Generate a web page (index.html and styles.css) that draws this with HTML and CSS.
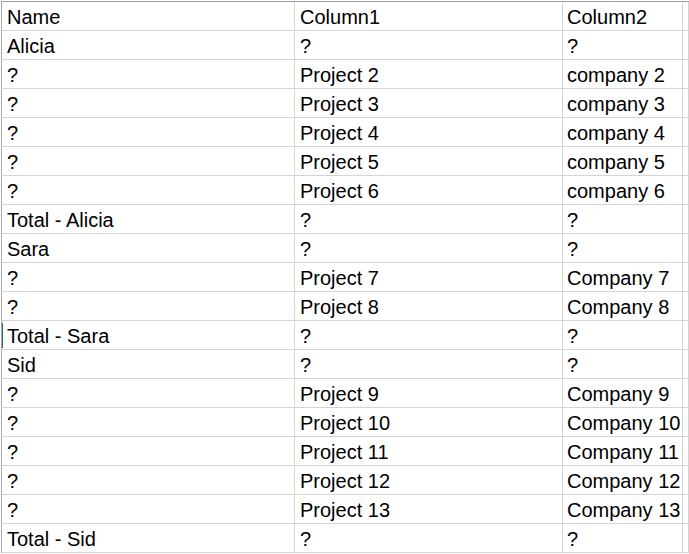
FILE: index.html
```html
<!DOCTYPE html>
<html>
<head>
<meta charset="utf-8">
<link rel="stylesheet" href="styles.css">
</head>
<body>
<div class="sheet">
  <div class="row"><div class="cell">Name</div><div class="cell">Column1</div><div class="cell">Column2</div><div class="cell"></div></div>
  <div class="row"><div class="cell">Alicia</div><div class="cell">?</div><div class="cell">?</div><div class="cell"></div></div>
  <div class="row"><div class="cell">?</div><div class="cell">Project 2</div><div class="cell">company 2</div><div class="cell"></div></div>
  <div class="row"><div class="cell">?</div><div class="cell">Project 3</div><div class="cell">company 3</div><div class="cell"></div></div>
  <div class="row"><div class="cell">?</div><div class="cell">Project 4</div><div class="cell">company 4</div><div class="cell"></div></div>
  <div class="row"><div class="cell">?</div><div class="cell">Project 5</div><div class="cell">company 5</div><div class="cell"></div></div>
  <div class="row"><div class="cell">?</div><div class="cell">Project 6</div><div class="cell">company 6</div><div class="cell"></div></div>
  <div class="row"><div class="cell">Total - Alicia</div><div class="cell">?</div><div class="cell">?</div><div class="cell"></div></div>
  <div class="row"><div class="cell">Sara</div><div class="cell">?</div><div class="cell">?</div><div class="cell"></div></div>
  <div class="row"><div class="cell">?</div><div class="cell">Project 7</div><div class="cell">Company 7</div><div class="cell"></div></div>
  <div class="row"><div class="cell">?</div><div class="cell">Project 8</div><div class="cell">Company 8</div><div class="cell"></div></div>
  <div class="row"><div class="cell active">Total - Sara</div><div class="cell">?</div><div class="cell">?</div><div class="cell"></div></div>
  <div class="row"><div class="cell">Sid</div><div class="cell">?</div><div class="cell">?</div><div class="cell"></div></div>
  <div class="row"><div class="cell">?</div><div class="cell">Project 9</div><div class="cell">Company 9</div><div class="cell"></div></div>
  <div class="row"><div class="cell">?</div><div class="cell">Project 10</div><div class="cell">Company 10</div><div class="cell"></div></div>
  <div class="row"><div class="cell">?</div><div class="cell">Project 11</div><div class="cell">Company 11</div><div class="cell"></div></div>
  <div class="row"><div class="cell">?</div><div class="cell">Project 12</div><div class="cell">Company 12</div><div class="cell"></div></div>
  <div class="row"><div class="cell">?</div><div class="cell">Project 13</div><div class="cell">Company 13</div><div class="cell"></div></div>
  <div class="row"><div class="cell">Total - Sid</div><div class="cell">?</div><div class="cell">?</div><div class="cell"></div></div>
</div>
</body>
</html>
```

FILE: styles.css
```css
html, body {
  margin: 0;
  padding: 0;
  background: #ffffff;
  overflow: hidden;
}

.sheet {
  margin: 1px 0 0 1px;
  border-top: 1px solid #9f9f9f;
  font-family: "Liberation Sans", Arial, sans-serif;
  font-size: 20px;
  color: #000000;
}

.row {
  display: grid;
  grid-template-columns: 294px 268px 120px 1fr;
  height: 29px;
}

.cell {
  box-sizing: border-box;
  height: 29px;
  border-right: 1px solid #d4d4d4;
  border-bottom: 1px solid #d4d4d4;
  padding: 2px 0 0 5px;
  line-height: 26px;
  white-space: nowrap;
  overflow: hidden;
}

.cell:first-child {
  border-left: 1px solid #a9a9a9;
}

.cell:nth-child(3) {
  padding-left: 4px;
}

.cell.active {
  position: relative;
}

.cell.active::before {
  content: "";
  position: absolute;
  left: -1px;
  top: 2px;
  bottom: 1px;
  width: 2px;
  background: #217346;
}
```
